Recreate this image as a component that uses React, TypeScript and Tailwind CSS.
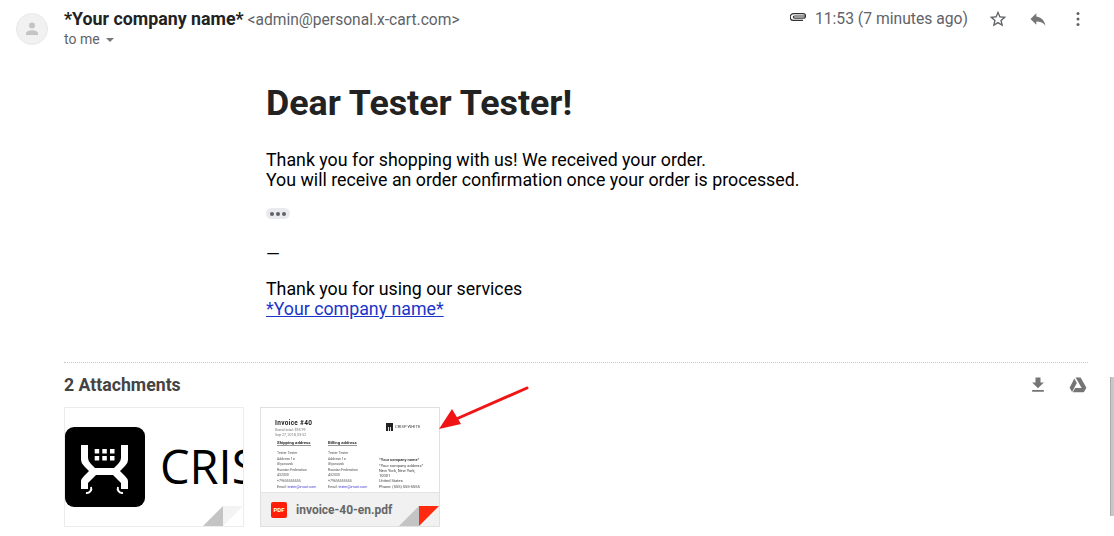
import React from "react";

const Avatar = () => (
  <div className="w-8 h-8 rounded-full bg-[#f1f1f1] border border-[#e8e8e8] flex items-center justify-center shrink-0">
    <svg width="16" height="16" viewBox="0 0 16 16" fill="#c4c4c4">
      <circle cx="8" cy="4.5" r="3" />
      <path d="M2 14v-1.6C2 10.4 5.6 9.2 8 9.2s6 1.2 6 3.2V14z" />
    </svg>
  </div>
);

const CartLogo = () => (
  <div className="w-20 h-20 rounded-[9px] bg-black shrink-0 flex items-center justify-center">
    <svg width="80" height="80" viewBox="0 0 80 80" fill="none" stroke="#fff">
      <path
        d="M16 18H23V31Q23 34 26 37L30 41H49L53 37Q56 34 56 31V18H63V33Q63 36 60 39L55 44L60 49Q63 52 63 54V62H56V56L48 48H31L23 56V62H16V54Q16 52 19 49L24 44L19 39Q16 36 16 33Z"
        fill="#fff"
        stroke="none"
      />
      <path d="M26 60a4.5 4.5 0 0 1-5 6M53 60a4.5 4.5 0 0 0 5 6" strokeWidth="2" />
      <g fill="#fff" stroke="none">
        <rect x="29.7" y="22" width="4.5" height="4.5" />
        <rect x="37.3" y="22" width="4.5" height="4.5" />
        <rect x="45" y="22" width="4.5" height="4.5" />
        <rect x="29.7" y="29" width="4.5" height="4.5" />
        <rect x="37.3" y="29" width="4.5" height="4.5" />
        <rect x="45" y="29" width="4.5" height="4.5" />
      </g>
    </svg>
  </div>
);

const Fold = ({ red }: { red?: boolean }) => (
  <svg className="absolute right-0 bottom-0" width="40" height="20" viewBox="0 0 40 20">
    <path d="M0 20 L20 0 V20 Z" fill="#c4c4c4" />
    <path d="M20 0 H40 L20 20 Z" fill={red ? "#ff2a0f" : "#f3f3f3"} />
  </svg>
);

const AddressCol = ({ title, lines, mail }: { title: string; lines: string[]; mail: string }) => (
  <div className="w-[51px] whitespace-nowrap">
    <div className="text-[4.3px] leading-[5px] font-bold text-[#333] border-b border-[#999] w-fit">{title}</div>
    <div className="mt-[5px] text-[3.5px] leading-[5.5px] text-[#555]">
      {lines.map((l) => (
        <div key={l}>{l}</div>
      ))}
      <div className="mt-[1px]">
        Email: <span className="text-[#4a3fd0]">{mail}</span>
      </div>
    </div>
  </div>
);

export default function App() {
  const addr = ["Tester   Tester", "Address 1a", "Glyanovsk", "Russian Federation", "432030", "+79655555555"];

  return (
    <div className="w-[1114px] h-[536px] bg-white overflow-hidden relative font-['Roboto',sans-serif]">
      {/* header */}
      <div className="flex pl-4 pr-[26px] pt-[9px] h-[83px]">
        <div className="pt-1 pr-4">
          <Avatar />
        </div>
        <div className="flex-1">
          <div className="leading-5 text-[#5f6368]">
            <span className="text-[17.8px] font-bold text-[#222]">*Your company name*</span>{" "}
            <span className="text-[15.6px] text-[#5f6368]">&lt;admin@personal.x-cart.com&gt;</span>
          </div>
          <div className="text-[14px] leading-5 text-[#5f6368] flex items-center gap-[6px] mt-[-1px]">
            to me
            <span className="w-0 h-0 border-x-[4px] border-x-transparent border-t-[4px] border-t-[#777] mt-[2px]" />
          </div>
        </div>
        <div className="flex items-start text-[#5f6368]">
          <svg className="mt-[4px] mr-[9px]" width="16" height="8" viewBox="0 0 16 8" fill="none" stroke="#333" strokeWidth="1.2">
            <path d="M15.4 3H4.5a1 1 0 0 0 0 2.2h8.7a2.3 2.3 0 0 0 0-4.6H3.6a3 3 0 0 0 0 6.8h9.4" />
          </svg>
          <span className="text-[15.7px] leading-5">11:53 (7 minutes ago)</span>
          <svg className="ml-[20px]" width="20" height="20" viewBox="0 0 24 24" fill="#5f6368">
            <path d="M22 9.24l-7.19-.62L12 2 9.19 8.63 2 9.24l5.46 4.73L5.82 21 12 17.27 18.18 21l-1.63-7.03L22 9.24zM12 15.4l-3.76 2.27 1-4.28-3.32-2.88 4.38-.38L12 6.1l1.71 4.04 4.38.38-3.32 2.88 1 4.28L12 15.4z" />
          </svg>
          <svg className="ml-[20px]" width="20" height="20" viewBox="0 0 24 24" fill="#757575">
            <path d="M10 9V5l-7 7 7 7v-4.1c5 0 8.5 1.6 11 5.1-1-5-4-10-11-11z" />
          </svg>
          <svg className="ml-[20px]" width="20" height="20" viewBox="0 0 24 24" fill="#5f6368">
            <circle cx="12" cy="5.5" r="1.8" />
            <circle cx="12" cy="12" r="1.8" />
            <circle cx="12" cy="18.5" r="1.8" />
          </svg>
        </div>
      </div>

      {/* message body */}
      <div className="pl-[266px] text-black">
        <h1 className="text-[35.8px] leading-10 font-bold text-[#222]">Dear Tester Tester!</h1>
        <div className="mt-[27px] text-[17.8px] leading-5">
          <div>Thank you for shopping with us! We received your order.</div>
          <div>You will receive an order confirmation once your order is processed.</div>
        </div>
        <div className="mt-[18px] w-6 h-[11px] rounded-full bg-[#e8eaed] flex items-center justify-center gap-[2px]">
          <span className="w-1 h-1 rounded-full bg-[#5f6368]" />
          <span className="w-1 h-1 rounded-full bg-[#5f6368]" />
          <span className="w-1 h-1 rounded-full bg-[#5f6368]" />
        </div>
        <div className="mt-[25px] text-[17.8px] leading-5 h-5">—</div>
        <div className="mt-[15px] text-[17.8px] leading-5">
          <div>Thank you for using our services</div>
          <a href="#" className="text-[#1a35c8] underline">
            *Your company name*
          </a>
        </div>
      </div>

      {/* attachments */}
      <div className="ml-16 mr-[26px] mt-[43px] border-t border-dotted border-[#c8c8c8]">
        <div className="flex items-center justify-between h-[44px]">
          <span className="text-[17.7px] font-bold text-[#444]">2 Attachments</span>
          <div className="flex items-center gap-5 text-[#777]">
            <svg width="20" height="20" viewBox="0 0 24 24" fill="#757575">
              <path d="M19 9h-4V3H9v6H5l7 7 7-7zM5 18v2h14v-2H5z" />
            </svg>
            <svg width="20" height="20" viewBox="0 0 24 24" fill="#757575">
              <path d="M8.9 3h6.2l7 12.2-3 5.3-7-12.3-3.1-5.2zM7.6 4.3l3 5.2L4.9 20.5l-3-5.3zM8.6 15.5h13l-3 5.3H5.7z" />
            </svg>
          </div>
        </div>
        <div className="flex gap-4">
          <div className="relative w-[180px] h-[120px] border border-[#ececec] overflow-hidden flex items-center">
            <CartLogo />
            <span className="ml-[15px] text-[47px] leading-none font-medium text-black font-['Open_Sans',sans-serif] whitespace-nowrap mt-[-2px]">CRISP</span>
            <Fold />
          </div>
          <div className="relative w-[180px] h-[120px] border border-[#e0e0e0] overflow-hidden flex flex-col">
            <div className="flex-1 flex justify-between pl-[14px] pr-[17px] pt-[11px] blur-[0.5px]">
              <div>
                <div className="text-[6.5px] leading-[8px] font-bold text-[#222] tracking-[0.3px]">Invoice #40</div>
                <div className="text-[3.6px] leading-[5px] text-[#777] mt-[1px] whitespace-nowrap">Grand total: $95.99</div>
                <div className="text-[3.6px] leading-[5px] text-[#777] whitespace-nowrap">Sep 27, 2018, 03:52</div>
                <div className="flex mt-[2px] ml-[2px]">
                  <AddressCol title="Shipping address" lines={addr} mail="tester@x-cart.com" />
                  <AddressCol title="Billing address" lines={addr} mail="tester@x-cart.com" />
                </div>
              </div>
              <div className="flex flex-col justify-between pb-[3px] w-[48px]">
                <div className="flex items-center gap-[2px] mt-[4px] ml-[7px]">
                  <span className="w-[7px] h-2 bg-[#222] shrink-0 flex items-end justify-center">
                    <span className="w-[3px] h-1 border-x border-[#ddd]" />
                  </span>
                  <span className="text-[4.2px] text-[#444] whitespace-nowrap">CRISP WHITE</span>
                </div>
                <div className="text-[4px] leading-[5.3px] text-[#444] whitespace-nowrap">
                  <div className="font-bold">*Your company name*</div>
                  <div>*Your company address*</div>
                  <div>New York, New York,</div>
                  <div>10001</div>
                  <div>United States</div>
                  <div>Phone: (555) 555-5555</div>
                </div>
              </div>
            </div>
            <div className="h-[34px] bg-[#f1f1f1] border-t border-[#e4e4e4] flex items-center pl-[10px] gap-[9px] shrink-0">
              <span className="w-4 h-4 rounded-[2px] bg-[#ff1e0a] text-white text-[6px] font-bold flex items-center justify-center">PDF</span>
              <span className="text-[12px] font-bold text-[#666]">invoice-40-en.pdf</span>
            </div>
            <Fold red />
          </div>
        </div>
      </div>

      {/* annotation arrow */}
      <svg className="absolute left-[436px] top-[385px]" width="94" height="48" viewBox="0 0 94 48">
        <path d="M91 3 L18 35" stroke="#f01414" strokeWidth="3" strokeLinecap="round" />
        <path d="M3 44 L16 24 L25 39 Z" fill="#f01414" />
      </svg>

      {/* scrollbar */}
      <div className="absolute right-0 top-[377px] w-1 h-[139px] bg-[#c8c8c8] border-l border-[#aaa]" />
    </div>
  );
}
